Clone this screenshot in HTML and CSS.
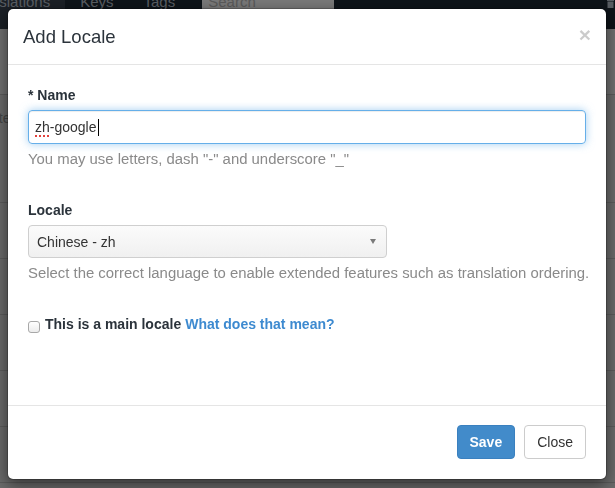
FILE: index.html
```html
<!DOCTYPE html>
<html lang="en">
<head>
<meta charset="utf-8">
<title>Add Locale</title>
<link rel="stylesheet" href="styles.css">
</head>
<body>
<div class="page">
  <nav class="navbar">
    <a class="nav-item active">Translations</a>
    <a class="nav-item">Keys</a>
    <a class="nav-item">Tags</a>
    <div class="search">Search translations</div>
    <div class="nav-right">
      <svg class="nav-icon" width="9" height="10" viewBox="0 0 9 10"><path d="M1 2h7v1H1zM3 0h3v2H3zM1.5 3.5h6V10h-6z" fill="#b3bcc6"/></svg>
      <span>Sign out</span>
    </div>
  </nav>
  <div class="toolbar"></div>
  <div class="filter-row"><span class="filter-label">Filter</span></div>
  <div class="table-row"></div>
  <div class="table-row"></div>
  <div class="table-row"></div>
  <div class="table-row"></div>
  <div class="table-row"></div>
</div>

<div class="backdrop"></div>

<div class="modal" role="dialog">
  <div class="modal-header">
    <button class="close" type="button">×</button>
    <h4 class="modal-title">Add Locale</h4>
  </div>
  <div class="modal-body">
    <div class="form-group">
      <label class="control-label">* Name</label>
      <div class="form-control focused"><span class="misspelled">zh</span>-google<span class="caret"></span></div>
      <p class="help-block">You may use letters, dash "-" and underscore "_"</p>
    </div>
    <div class="form-group">
      <label class="control-label">Locale</label>
      <div class="select"><span>Chinese - zh</span><span class="select-arrow"></span></div>
      <p class="help-block">Select the correct language to enable extended features such as translation ordering.</p>
    </div>
    <div class="checkbox">
      <input type="checkbox" class="check">
      <span class="check-label">This is a main locale</span>
      <a class="link" href="#">What does that mean?</a>
    </div>
  </div>
  <div class="modal-footer">
    <button class="btn btn-primary" type="button">Save</button>
    <button class="btn btn-default" type="button">Close</button>
  </div>
</div>
</body>
</html>
```

FILE: styles.css
```css
* { box-sizing: border-box; }

html, body {
  margin: 0;
  height: 100%;
}

body {
  font-family: "Liberation Sans", Arial, Helvetica, sans-serif;
  font-size: 14px;
  line-height: 20px;
  color: #2b333b;
  background: #d6d6d6;
  overflow: hidden;
}

/* ---------- underlying page ---------- */
.page {
  margin-left: -46px;
  width: 720px;
}

.navbar {
  display: flex;
  align-items: flex-start;
  height: 43px;
  margin-top: -14px;
  background: #1c2833;
}

.nav-item {
  height: 43px;
  padding: 6px 15px 0;
  font-size: 15px;
  color: #b3bcc6;
}

.nav-item.active {
  background: #36414c;
}

.search {
  margin-left: 12px;
  width: 160px;
  height: 24px;
  padding: 6px 0 0 6px;
  background: #f5f5f5;
  color: #b6b6b6;
  font-size: 15px;
}

.nav-right {
  display: flex;
  align-items: center;
  gap: 4px;
  margin-left: 272px;
  padding-top: 6px;
  font-size: 15px;
  color: #b3bcc6;
  white-space: nowrap;
}

.nav-icon { margin-top: 2px; }

.toolbar {
  height: 66px;
  background: #e2e2e2;
  border-bottom: 1px solid #b8b8b8;
}

.filter-row {
  height: 108px;
  padding: 13px 0 0 30px;
  border-bottom: 1px solid #b8b8b8;
  color: #8c8c8c;
}

.table-row {
  height: 56px;
  border-bottom: 1px solid #b8b8b8;
}

.backdrop {
  position: fixed;
  inset: 0;
  background: rgba(0, 0, 0, 0.5);
}

/* ---------- modal ---------- */
.modal {
  position: absolute;
  top: 8px;
  left: 7px;
  width: 600px;
  background: #fff;
  background-clip: padding-box;
  border: 1px solid rgba(0, 0, 0, 0.2);
  border-radius: 6px;
  box-shadow: 0 5px 15px rgba(0, 0, 0, 0.5);
}

.modal-header {
  padding: 15px;
  border-bottom: 1px solid #e5e5e5;
}

.modal-title {
  margin: 0;
  font-size: 18.5px;
  line-height: 25px;
  font-weight: normal;
  color: #2b333b;
}

.close {
  float: right;
  margin: 0;
  padding: 0;
  border: 0;
  background: transparent;
  font-family: "Liberation Sans", Arial, sans-serif;
  font-size: 21px;
  line-height: 21px;
  font-weight: bold;
  color: #000;
  opacity: 0.2;
}

.modal-body {
  padding: 20px;
}

.form-group {
  margin-bottom: 31px;
}

.control-label {
  display: block;
  margin-bottom: 5px;
  font-weight: bold;
  color: #2b333b;
}

.form-control {
  height: 34px;
  padding: 6px 6px;
  border: 1px solid #ccc;
  border-radius: 4px;
  color: #333;
}

.form-control.focused {
  border-color: #66afe9;
  box-shadow: inset 0 1px 1px rgba(0, 0, 0, 0.075), 0 0 8px rgba(102, 175, 233, 0.6);
}

.misspelled {
  text-decoration: underline dotted #e2413b;
  text-decoration-thickness: 2px;
  text-underline-offset: 3px;
}

.caret {
  display: inline-block;
  width: 1px;
  height: 17px;
  margin-left: 1px;
  vertical-align: -4px;
  background: #000;
}

.help-block {
  margin: 5px 0 0;
  font-size: 14.9px;
  color: #8a8a8a;
  white-space: nowrap;
}

.select {
  position: relative;
  display: flex;
  align-items: center;
  width: 359px;
  height: 33px;
  padding: 0 8px;
  border: 1px solid #cfcfcf;
  border-radius: 4px;
  background: linear-gradient(#fbfbfb, #f0f0f0);
  color: #333;
}

.select-arrow {
  margin-left: auto;
  margin-right: 2px;
  width: 0;
  height: 0;
  border-left: 3.5px solid transparent;
  border-right: 3.5px solid transparent;
  border-top: 5px solid #7a7a7a;
}

.checkbox {
  display: flex;
  align-items: flex-start;
  margin-bottom: 51px;
  font-weight: bold;
  white-space: nowrap;
}

.check {
  appearance: none;
  -webkit-appearance: none;
  width: 12px;
  height: 12px;
  margin: 7px 5px 0 0;
  border: 1px solid #a8a8a8;
  border-radius: 3px;
  background: linear-gradient(#fff, #ececec);
}

.check-label { color: #2b333b; }

.link {
  margin-left: 4px;
  color: #3d8ad0;
  text-decoration: none;
}

.modal-footer {
  display: flex;
  justify-content: flex-end;
  gap: 9px;
  padding: 19px 20px 20px;
  border-top: 1px solid #e5e5e5;
}

.btn {
  height: 34px;
  padding: 6px 12px;
  border: 1px solid transparent;
  border-radius: 4px;
  font-family: "Liberation Sans", Arial, sans-serif;
  font-size: 14px;
  line-height: 20px;
}

.btn-primary {
  background: #428bca;
  border-color: #3a80bf;
  color: #fff;
  font-weight: bold;
}

.btn-default {
  background: #fff;
  border-color: #ccc;
  color: #333;
}
```
